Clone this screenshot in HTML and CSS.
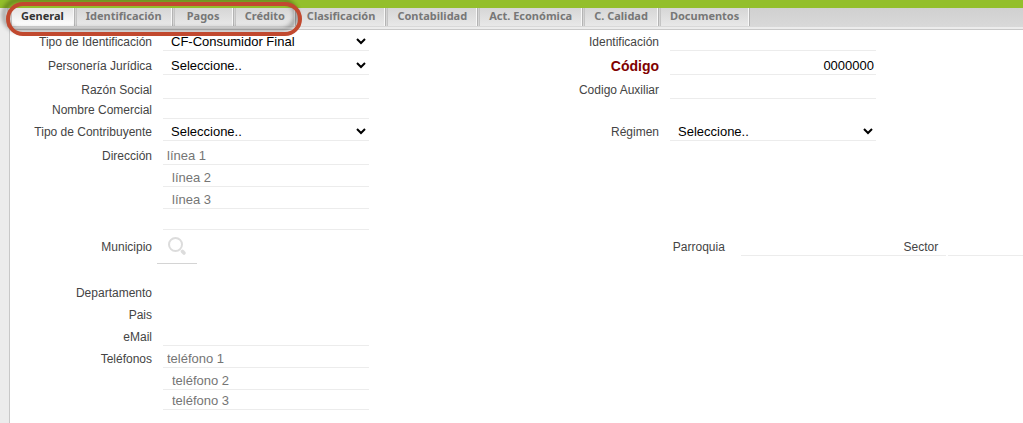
FILE: index.html
```html
<!DOCTYPE html>
<html lang="es">
<head>
    <meta charset="UTF-8">
    <meta name="viewport" content="width=device-width, initial-scale=1.0">
    <title>Terceros</title>
    <link rel="stylesheet" href="styles.css">
</head>
<body>
    <div class="topbar"></div>
    <div class="workspace">
        <nav class="tabs">
            <button type="button" class="tab active">General</button>
            <button type="button" class="tab">Identificación</button>
            <button type="button" class="tab">Pagos</button>
            <button type="button" class="tab">Crédito</button>
            <button type="button" class="tab">Clasificación</button>
            <button type="button" class="tab">Contabilidad</button>
            <button type="button" class="tab">Act. Económica</button>
            <button type="button" class="tab">C. Calidad</button>
            <button type="button" class="tab">Documentos</button>
        </nav>
        <form class="panel">
            <div class="row row-slim">
                <label for="tipo-id">Tipo de Identificación</label>
                <select id="tipo-id" class="field"><option>CF-Consumidor Final</option></select>
                <label for="identificacion">Identificación</label>
                <input id="identificacion" class="field" type="text">
            </div>
            <div class="row row-tall">
                <label for="personeria">Personería Jurídica</label>
                <select id="personeria" class="field"><option>Seleccione..</option></select>
                <label for="codigo" class="required">Código</label>
                <input id="codigo" class="field number" type="text" value="0000000">
            </div>
            <div class="row row-tall">
                <label for="razon">Razón Social</label>
                <input id="razon" class="field" type="text">
                <label for="auxiliar">Codigo Auxiliar</label>
                <input id="auxiliar" class="field" type="text">
            </div>
            <div class="row row-short">
                <label for="comercial">Nombre Comercial</label>
                <input id="comercial" class="field" type="text">
            </div>
            <div class="row">
                <label for="contribuyente">Tipo de Contribuyente</label>
                <select id="contribuyente" class="field"><option>Seleccione..</option></select>
                <label for="regimen">Régimen</label>
                <select id="regimen" class="field"><option>Seleccione..</option></select>
            </div>
            <div class="row row-tall">
                <label for="linea1">Dirección</label>
                <input id="linea1" class="field" type="text" placeholder="línea 1">
            </div>
            <div class="row">
                <input class="field extra" type="text" placeholder="línea 2" aria-label="Dirección línea 2">
            </div>
            <div class="row">
                <input class="field extra" type="text" placeholder="línea 3" aria-label="Dirección línea 3">
            </div>
            <div class="row row-slim">
                <input class="field extra" type="text" aria-label="Dirección línea 4">
            </div>
            <div class="row row-city">
                <label for="municipio">Municipio</label>
                <button type="button" id="municipio" class="search" aria-label="Buscar municipio">
                    <svg width="20" height="20" viewBox="0 0 20 20" fill="none" stroke="#dcdcdc">
                        <circle cx="8.5" cy="8.5" r="6.5" stroke-width="2"/>
                        <path d="M15.5 15.5l1.5 1.5" stroke-width="3.6" stroke-linecap="round"/>
                    </svg>
                </button>
                <div class="place">
                    <label for="parroquia">Parroquia</label>
                    <input id="parroquia" class="field parroquia" type="text">
                    <label for="sector" class="sector-label">Sector</label>
                    <input id="sector" class="field sector" type="text">
                </div>
            </div>
            <div class="row row-gap">
                <span class="label">Departamento</span>
            </div>
            <div class="row">
                <span class="label">Pais</span>
            </div>
            <div class="row">
                <label for="email">eMail</label>
                <input id="email" class="field" type="email">
            </div>
            <div class="row">
                <label for="tel1">Teléfonos</label>
                <input id="tel1" class="field" type="tel" placeholder="teléfono 1">
            </div>
            <div class="row">
                <input class="field extra" type="tel" placeholder="teléfono 2" aria-label="Teléfono 2">
            </div>
            <div class="row row-short">
                <input class="field extra" type="tel" placeholder="teléfono 3" aria-label="Teléfono 3">
            </div>
        </form>
    </div>
    <div class="marker"></div>
</body>
</html>
```

FILE: styles.css
```css
* {
    box-sizing: border-box;
}
body {
    margin: 0;
    min-height: 100vh;
    display: flex;
    flex-direction: column;
    background: #fff;
    font-family: "Liberation Sans", Arial, sans-serif;
    font-size: 12px;
    color: #444;
    overflow-x: hidden;
}
.topbar {
    height: 8px;
    background: #93bf2b;
}
.workspace {
    flex: 1;
    display: flex;
    flex-direction: column;
    padding-left: 7px;
    background: #ececec;
}
/* Tab strip */
.tabs {
    display: flex;
    gap: 3px;
    height: 19px;
    padding: 0 0 1px 5px;
    background: linear-gradient(#d0d0d0, #d9d9d9);
}
.tab {
    min-width: 58px;
    border: 0;
    border-right: 1px solid #f8f8f8;
    box-shadow: 1px 0 #b4b4b4, -1px 0 #c4c4c4;
    padding: 0 9px 2px;
    background: linear-gradient(#d6d6d6, #e8e8e8);
    font: bold 11px "Noto Sans", Tahoma, sans-serif;
    line-height: 14px;
    color: #777;
    white-space: nowrap;
}
.tab.active {
    background: linear-gradient(#e4e4e4, #fff);
    color: #333;
}
/* Form */
.panel {
    flex: 1;
    border-top: 1px solid #c8c8c8;
    border-left: 1px solid #c8c8c8;
    margin: 2px 0 0 2px;
    background: #fff;
}
.row {
    display: grid;
    grid-template-columns: minmax(0, 142fr) minmax(0, 206fr) minmax(0, 279fr) minmax(0, 206fr) minmax(0, 136fr);
    column-gap: 11px;
    align-items: end;
    height: 22px;
}
.row-short {
    height: 20px;
}
.row-slim {
    height: 21px;
}
.row-tall {
    height: 24px;
}
label,
.label {
    padding-bottom: 1px;
    line-height: 16px;
    text-align: right;
    white-space: nowrap;
}
.required {
    font-size: 14px;
    font-weight: bold;
    color: #800000;
}
.field {
    width: 100%;
    height: 19px;
    border: 0;
    border-bottom: 1px solid #ececec;
    border-radius: 0;
    padding: 0 2px 0 4px;
    background: transparent;
    font: 13px "Liberation Sans", Arial, sans-serif;
    color: #000;
}
.field::placeholder {
    color: #757575;
}
select.field {
    padding: 0 0 0 4px;
}
.extra {
    grid-column: 2;
    padding-left: 9px;
}
.number {
    text-align: right;
}
.row-city {
    height: 34px;
    align-items: start;
}
.row-city > label {
    padding-top: 9px;
}
.search {
    width: 40px;
    height: 34px;
    margin-left: -6px;
    border: 0;
    border-bottom: 1px solid #d4d4d4;
    padding: 0 0 2px 10px;
    background: transparent;
}
.search svg {
    display: block;
}
/* Sector label sits on the end of the Parroquia field */
.place {
    grid-column: 3 / 6;
    display: grid;
    grid-template-columns: minmax(0, 360fr) minmax(0, 206fr) minmax(0, 75fr);
    column-gap: 2px;
    align-items: end;
    height: 26px;
}
.place label {
    grid-area: 1 / 1;
    padding-right: 14px;
}
.place .sector-label {
    grid-area: 1 / 2;
    padding-right: 8px;
}
.parroquia {
    grid-area: 1 / 2;
}
.sector {
    grid-area: 1 / 3;
}
.row-gap {
    height: 38px;
}
/* Highlight ring over the first tabs */
.marker {
    position: absolute;
    top: 2px;
    left: 6px;
    width: 296px;
    height: 34px;
    border: 4px solid #c1492f;
    border-radius: 18px;
    filter: drop-shadow(-4px -4px 2px rgba(0, 0, 0, 0.35));
    pointer-events: none;
}
```
